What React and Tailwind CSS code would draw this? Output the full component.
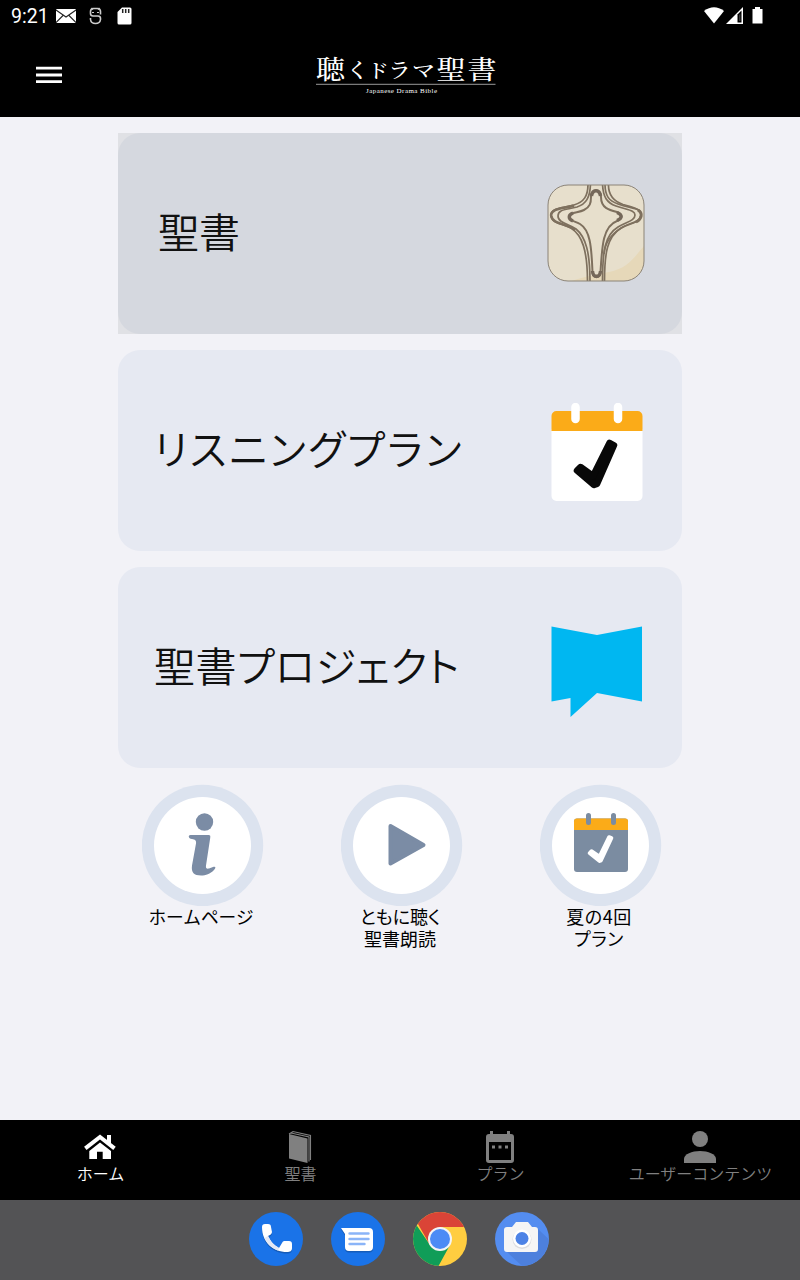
import React from 'react';

function StatusBar() {
    return (
        <div className="flex h-8 items-center justify-between bg-black pl-[11px] pr-[37px] text-white">
            <div className="flex items-center">
                <span className="w-[45px] pt-[2px] font-['Roboto',sans-serif] text-[19.5px] leading-8 whitespace-nowrap">9:21</span>
                <svg width="20" height="14" viewBox="0 0 20 14">
                    <rect width="20" height="14" rx="1" fill="#fff" />
                    <path d="M0 1l10 7 10-7M0 13.5l7-7M20 13.5l-7-7" fill="none" stroke="#222" strokeWidth="1.1" />
                </svg>
                <svg className="ml-[13px]" width="13" height="18" viewBox="0 0 13 18" fill="none" stroke="#ccc" strokeWidth="1.6">
                    <path d="M11.5 7.500V4.500Q11.500 1.500 8.500 1.500h-4Q1.500 1.500 1.500 4.500v2Q1.500 9 4 9h5q2.500 0 2.500 2.500v1Q11 16.500 6.500 16.500T1.500 12.500V11" />
                    <path d="M3 5.500h2M8 5.500h2M2.500 1L4 2.500M10.500 1L9 2.500" strokeWidth="1.200" />
                </svg>
                <svg className="ml-[15px]" width="15" height="18" viewBox="0 0 15 18">
                    <path d="M5 .5h8a1.500 1.500 0 0 1 1.500 1.500v14a1.500 1.500 0 0 1-1.500 1.500H2A1.500 1.500 0 0 1 .5 16V5z" fill="#fff" />
                    <path d="M5.700 2v4M8.700 2v4M11.700 2v4" stroke="#222" strokeWidth="1.500" />
                </svg>
            </div>
            <div className="flex items-center pb-[2px]">
                <svg width="20" height="17" viewBox="0 0 20 17">
                    <path d="M0 4Q10-3.500 20 4L10 16.500z" fill="#fff" />
                </svg>
                <svg className="ml-[2px]" width="17" height="17" viewBox="0 0 17 17">
                    <path d="M0 17L17 0v17z" fill="#fff" />
                    <path d="M11.500 7.500L15.500 3.500v12h-4z" fill="#000" />
                    <path d="M13 8l1.500-1.500V14H13z" fill="#333" />
                </svg>
                <svg className="ml-[9px]" width="11" height="17" viewBox="0 0 11 17">
                    <path d="M3 0h5v2h2.500v14.500H.5V2H3z" fill="#fff" />
                </svg>
            </div>
        </div>
    );
}

function Logo() {
    const glyphs = [
        ['聴', 316, 29],
        ['く', 346, 23],
        ['ド', 367, 22],
        ['ラ', 388, 23],
        ['マ', 412, 23],
        ['聖', 436.5, 29],
        ['書', 467.5, 29],
    ];

    return (
        <svg width="195" height="77" viewBox="311 36 195 77" fill="#fff">
            <g fontFamily="'Noto Serif CJK JP', 'Noto Sans CJK JP', serif" fontWeight="500" transform="translate(0 7.500) scale(1 .9)">
                {glyphs.map(([char, x, size]) => (
                    <text key={char} x={x} y={size > 25 ? 79 : 78.5} fontSize={size}>{char}</text>
                ))}
            </g>
            <path d="M316 84.300h179.500" stroke="#999" strokeWidth="1" />
            <text x="366" y="93" fontSize="7" textLength="71" fontFamily="'Liberation Serif', serif">Japanese Drama Bible</text>
        </svg>
    );
}

function Header() {
    return (
        <header className="flex h-[85px] bg-black">
            <div className="w-[311px] pt-[34px] pl-9">
                <svg width="26" height="18" viewBox="0 0 26 18" stroke="#fff" strokeWidth="2.8">
                    <path d="M0 2.200h26M0 9h26M0 15.700h26" />
                </svg>
            </div>
            <div className="pt-1">
                <Logo />
            </div>
        </header>
    );
}

function CrossIcon() {
    return (
        <svg className="mb-[2px]" width="98" height="98" viewBox="0 0 98 98">
            <defs>
                <clipPath id="tile"><rect x="1" y="1" width="96" height="96" rx="20" /></clipPath>
            </defs>
            <g clipPath="url(#tile)">
                <rect width="98" height="98" fill="#e7dfcc" />
                <path d="M98 61C87 73 82 84 62 88C47 91 35 93 22 98H98z" fill="#e6d8b9" />
                <g fill="none" stroke="#7e705e" strokeWidth="1.700">
                    <path d="M41 0C41 12 37 18 27 21C15 24 4 24 4 31C4 40 15 39 24 44C35 51 40.500 66 40.500 98" />
                    <path d="M43.500 0C43 14 39 20 30 23C19 26 11 25 11 32C11 39 22 40 29 45C39 53 43 69 43 98" />
                    <path d="M4 31C5 24 16 25 27 21.500M4 31C5 40 18 39 28 46" strokeWidth="2.500" />
                    <path d="M55.500 0C56 13 60 19 69 22C80 26 88 26 88 31C88 37 79 38 71 43C58 51 55.500 66 55.500 98" />
                    <path d="M58 0C58 12 62 17 71 20C84 25 94 23 94 31C94 39 83 39 74 44C60 53 57.500 69 57.500 98" />
                    <path d="M61.500 0C61 11 66 17 76 20.500C85 23 95 25 94 31C93 39 84 38 76 43C62 51 58 60 57 70" />
                    <path d="M91 26C96 29 95 35 89 38" strokeWidth="3" />
                </g>
                <path d="M44 13C44 4 54 4 54 13C54 24 62 26 70 28C76 30 76 35 70 37C56 42 55 62 53.500 88C53 95 46 95 45.500 88C44.500 62 43 46 33 40C28 37 22 37 22 33C22 28 31 29 37 26C43 23 44 19 44 13z" fill="none" stroke="#7e705e" strokeWidth="2" />
                <path d="M44.500 12C45.500 5 52.500 5 53.500 12M45.500 87C46 94 53 94 53.500 87M26 29C21 31 21 35 26 37M70 28.500C75.500 31 75.500 34 70 36.500" fill="none" stroke="#75685a" strokeWidth="3.400" />
            </g>
            <rect x="1" y="1" width="96" height="96" rx="20" fill="none" stroke="#8b8377" strokeWidth="1" />
        </svg>
    );
}

function CalendarIcon() {
    return (
        <svg className="mt-1" width="92" height="99" viewBox="0 0 92 99">
            <path d="M.5 26h91v67a5 5 0 0 1-5 5h-81a5 5 0 0 1-5-5z" fill="#fff" />
            <path d="M.5 28V13a5 5 0 0 1 5-5h81a5 5 0 0 1 5 5v15z" fill="#fbab18" />
            <path d="M24.500 4v12M67 4v12" stroke="#fff" strokeWidth="8.500" strokeLinecap="round" />
            <path d="M58.500 40L63 42.300 46 81 43 82 26 67.500 29.500 64 42 73z" fill="#080808" stroke="#080808" strokeWidth="6.500" strokeLinejoin="round" />
        </svg>
    );
}

function BookBubbleIcon() {
    return (
        <svg className="mt-2" width="92" height="92" viewBox="0 0 92 92">
            <path d="M.5 .5L46 9 91 .5V75.500L46 67 19.500 91V72L.5 75.500z" fill="#00b7f1" />
        </svg>
    );
}

function Card({ title, icon, className, titleClass }) {
    return (
        <div className={`flex h-[201px] items-center justify-between ${className}`}>
            <span className={`pb-[6px] font-[350] whitespace-nowrap text-[#111] [font-feature-settings:'palt'] ${titleClass}`}>{title}</span>
            {icon}
        </div>
    );
}

function Round({ children, lines, labelClass }) {
    return (
        <div className="flex w-[199px] flex-col items-center">
            <svg width="122" height="122" viewBox="0 0 122 122">
                <g transform="translate(-.5 .5)">
                    <circle cx="61" cy="61" r="60.700" fill="#dce3ef" />
                    <circle cx="61" cy="61" r="48.500" fill="#fff" />
                    {children}
                </g>
            </svg>
            <div className={`-mt-px pr-[3px] text-center leading-[22px] text-black ${labelClass}`}>
                {lines.map(line => (
                    <div key={line}>{line}</div>
                ))}
            </div>
        </div>
    );
}

function NavItem({ label, active, children }) {
    return (
        <div className={`flex w-[200px] flex-col items-center pt-[10px] ${active ? 'text-white' : 'text-[#808080]'}`}>
            <svg width="36" height="34" viewBox="0 0 36 34" fill="currentColor">{children}</svg>
            <span className="-mt-px pl-px text-base leading-5 font-[350] whitespace-nowrap">{label}</span>
        </div>
    );
}

function Dock() {
    return (
        <div className="flex h-20 items-center justify-center gap-7 bg-[#535355] pr-[2px] pb-[2px]">
            <svg width="54" height="54" viewBox="0 0 54 54">
                <circle cx="27" cy="27" r="27" fill="#1a73e8" />
                <path d="M13 15c0-2 1-3 3-3h3c2 0 3 1 3 3l1 5c0 2-2 3-4 4 3 6 6 9 11 12l3-5c1-2 2-2 3-2h4c2 0 3 1 3 3v4c0 3-2 4-5 4C24 40 13 30 13 15z" fill="#155cb9" transform="translate(0 1.500)" />
                <path d="M13 15c0-2 1-3 3-3h3c2 0 3 1 3 3l1 5c0 2-2 3-4 4 3 6 6 9 11 12l3-5c1-2 2-2 3-2h4c2 0 3 1 3 3v4c0 3-2 4-5 4C24 40 13 30 13 15z" fill="#fff" />
                <path d="M19 24c3 6 6 9 11 12l-1 2.500c-6-2-11-7-13.500-12.500z" fill="#e4e8f4" />
            </svg>
            <svg width="54" height="54" viewBox="0 0 54 54">
                <circle cx="27" cy="27" r="27" fill="#1a73e8" />
                <path d="M10 16h28a4 4 0 0 1 4 4v15a4 4 0 0 1-4 4H18a4 4 0 0 1-4-4V22z" fill="#155cb9" transform="translate(0 1.500)" />
                <path d="M10 16h28a4 4 0 0 1 4 4v15a4 4 0 0 1-4 4H18a4 4 0 0 1-4-4V22z" fill="#fff" />
                <path d="M18.500 21.500h19M18.500 27h19M18.500 32h15" stroke="#8ab4f8" strokeWidth="2.400" strokeLinecap="round" />
            </svg>
            <svg width="54" height="54" viewBox="0 0 54 54">
                <defs>
                    <clipPath id="disc"><circle cx="27" cy="27" r="27" /></clipPath>
                </defs>
                <g clipPath="url(#disc)">
                    <path d="M0 0h54v54H0z" fill="#ffcd40" />
                    <path d="M0 8L17 33h10l10 0L25.500 54H0z" fill="#109d58" />
                    <path d="M0 0h54v15H27v18H17L5 12 0 5z" fill="#da4437" />
                </g>
                <circle cx="27" cy="27" r="12" fill="#f4f4f4" />
                <circle cx="27" cy="27" r="10" fill="#4c8bf5" />
            </svg>
            <svg width="54" height="54" viewBox="0 0 54 54">
                <circle cx="27" cy="27" r="27" fill="#548df0" />
                <path d="M43 17L53.500 27A27 27 0 0 1 27 54L12 40z" fill="#4d80dd" />
                <path d="M12 15h5l4-5h12l4 5h3a3 3 0 0 1 3 3v19a3 3 0 0 1-3 3H12a3 3 0 0 1-3-3V18a3 3 0 0 1 3-3z" fill="#f5f5f5" />
                <circle cx="27" cy="27.500" r="9.500" fill="#dcdde0" />
                <circle cx="27" cy="26.500" r="9" fill="#fff" />
                <circle cx="27" cy="26.500" r="6.500" fill="#4d83e6" />
            </svg>
        </div>
    );
}

export default function App() {
    return (
        <div className="flex h-[1280px] w-[800px] flex-col overflow-hidden bg-[#f2f2f7] font-['Noto_Sans_CJK_JP',sans-serif]">
            <StatusBar />
            <Header />

            <main className="flex-1 pt-4">
                <div className="mx-auto flex w-[564px] flex-col gap-4">
                    <div className="bg-[#e0e1e5]">
                        <Card
                            title="聖書"
                            icon={<CrossIcon />}
                            className="rounded-[22px] bg-[#d5d8df] pr-[37px] pl-10"
                            titleClass="text-[41px]"
                        />
                    </div>
                    <Card
                        title="リスニングプラン"
                        icon={<CalendarIcon />}
                        className="rounded-[22px] bg-[#e6e9f2] pr-[39px] pl-9"
                        titleClass="text-[41px] tracking-[2.3px]"
                    />
                    <Card
                        title="聖書プロジェクト"
                        icon={<BookBubbleIcon />}
                        className="rounded-[22px] bg-[#e6e9f2] pr-[39px] pl-9"
                        titleClass="text-[41px] tracking-[0.5px]"
                    />
                </div>

                <div className="mt-4 ml-[103px] flex">
                    <Round lines={['ホームページ']} labelClass="text-[17.700px]">
                        <g fill="#7b8ca5">
                            <circle cx="63" cy="37.500" r="8.700" />
                            <path d="M49 50.500h18c2 0 2 1 1.700 3L64.500 81c-.5 3 1 3.500 3 3l4-1.500c3-1 3 1 1 3-4 4-8 5.500-13 5.500-7 0-10-3-9-10l4-22c.5-3-1-4-4-4.500-4-.5-4-4-1.500-4z" />
                        </g>
                    </Round>
                    <Round lines={['ともに聴く', '聖書朗読']} labelClass="text-[18px] [font-feature-settings:'palt']">
                        <path d="M50 41.500L83 60.500 50 79z" fill="#7b8ca5" stroke="#7b8ca5" strokeWidth="4" strokeLinejoin="round" />
                    </Round>
                    <Round lines={['夏の4回', 'プラン']} labelClass="text-[18px] [font-feature-settings:'palt'] tracking-[0.6px]">
                        <rect x="34.500" y="34" width="54" height="53.500" rx="3" fill="#7b8ca1" />
                        <path d="M34.500 45.500V37a3 3 0 0 1 3-3h48a3 3 0 0 1 3 3v8.500z" fill="#fbab18" />
                        <path d="M49 31v7M74 31v7" stroke="#7b8ca1" strokeWidth="5" strokeLinecap="round" />
                        <path d="M69.500 52.500L72 53.500 61.500 76 60 76.700 50 68.700 52 66.500 60 72z" fill="#fff" stroke="#fff" strokeWidth="3.600" strokeLinejoin="round" />
                    </Round>
                </div>
            </main>

            <nav className="flex h-20 bg-black">
                <NavItem label="ホーム" active>
                    <path d="M7.300 21L18 12.500 29 21v8h-8.300v-7.300H15V29H7.300z" />
                    <path d="M25 5h4v9.500l-4-3.500z" />
                    <path d="M3.300 18.500L18 7.500 32.500 18.500" fill="none" stroke="#000" strokeWidth="6" />
                    <path d="M25 5h4v9.500l-4-3.500z" />
                    <path d="M3.300 18.300L18 7 32.500 18.300" fill="none" stroke="currentColor" strokeWidth="4" />
                </NavItem>
                <NavItem label="聖書">
                    <path d="M7 4L25.500 8.500V33L7 28.500z" />
                    <path d="M7 4L11 1.500 28.500 5.500V30M9 3L27 7V31.500" fill="none" stroke="currentColor" strokeWidth="1.100" />
                </NavItem>
                <NavItem label="プラン">
                    <path fillRule="evenodd" d="M8 1h3v3h14V1h3v3h1a3 3 0 0 1 3 3v23a3 3 0 0 1-3 3H7a3 3 0 0 1-3-3V7a3 3 0 0 1 3-3h1zM7 12v18h22V12z" />
                    <path d="M10 15.500h3v3h-3zM16.500 15.500h3v3h-3zM23 15.500h3v3h-3z" />
                </NavItem>
                <NavItem label="ユーザーコンテンツ">
                    <circle cx="18" cy="9" r="8" />
                    <path d="M2 33v-4c0-5 8-8 16-8s16 3 16 8v4z" />
                </NavItem>
            </nav>

            <Dock />
        </div>
    );
}
